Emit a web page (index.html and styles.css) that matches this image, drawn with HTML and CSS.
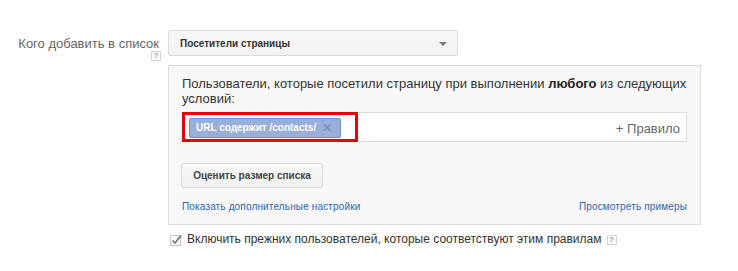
FILE: index.html
```html
<!DOCTYPE html>
<html lang="ru">
<head>
<meta charset="utf-8">
<link rel="stylesheet" href="styles.css">
</head>
<body>
<div class="form">
  <div class="label-col">
    <div class="label">Кого добавить в список</div>
    <span class="help">?</span>
  </div>
  <div class="content">
    <div class="select">
      <span class="select-text">Посетители страницы</span>
      <span class="arrow"></span>
    </div>
    <div class="panel">
      <p class="intro">Пользователи, которые посетили страницу при выполнении <strong>любого</strong> из следующих условий:</p>
      <div class="rules">
        <span class="chip"><span class="chip-text">URL содержит /contacts/</span><span class="chip-x">✕</span></span>
        <span class="add-rule">+ Правило</span>
        <div class="highlight"></div>
      </div>
      <button class="btn">Оценить размер списка</button>
      <div class="links">
        <a class="link">Показать дополнительные настройки</a>
        <a class="link">Просмотреть примеры</a>
      </div>
    </div>
    <div class="check-row">
      <svg class="check" width="12" height="12" viewBox="0 0 12 12">
        <rect x="0.5" y="1.5" width="10" height="10" fill="#fff" stroke="#c4c4c4"/>
        <path d="M2.5 6.5 L5 9 L11 1.5" fill="none" stroke="#6e6e6e" stroke-width="1.6"/>
      </svg>
      <span class="check-text">Включить прежних пользователей, которые соответствуют этим правилам</span>
      <span class="help help-inline">?</span>
    </div>
  </div>
</div>
</body>
</html>
```
FILE: styles.css
```css
* { box-sizing: border-box; }
body {
  margin: 0;
  background: #fff;
  font-family: "Liberation Sans", Arial, sans-serif;
  color: #333;
}
.form {
  display: flex;
  padding-top: 30px;
}
.label-col {
  width: 168px;
  padding-right: 9px;
  display: flex;
  flex-direction: column;
  align-items: flex-end;
}
.label {
  font-size: 13px;
  line-height: 15px;
  color: #666;
  margin-top: 6px;
}
.help {
  display: inline-block;
  width: 10px;
  height: 10px;
  border: 1px solid #d4d4d4;
  background: #f8f8f8;
  color: #aaa;
  font-size: 8px;
  line-height: 8px;
  text-align: center;
  font-weight: bold;
  margin-top: 0;
  margin-right: -2px;
}
.content {
  width: 533px;
}
.select {
  width: 290px;
  height: 26px;
  border: 1px solid #dcdcdc;
  border-radius: 2px;
  background: linear-gradient(#f8f8f8, #f1f1f1);
  display: flex;
  align-items: center;
  justify-content: space-between;
  padding: 0 10px 0 11px;
}
.select-text {
  font-size: 10px;
  font-weight: bold;
  color: #333;
}
.arrow {
  width: 0;
  height: 0;
  border-left: 4px solid transparent;
  border-right: 4px solid transparent;
  border-top: 4px solid #777;
  margin-top: 1px;
}
.panel {
  margin-top: 9px;
  border: 1px solid #ddd;
  background: #f8f8f8;
  padding: 10px 13px 10px 13px;
}
.intro {
  margin: 0;
  font-size: 13px;
  line-height: 15px;
  color: #333;
}
.intro strong { color: #222; }
.rules {
  position: relative;
  margin-top: 6px;
  height: 30px;
  border: 1px solid #dcdcdc;
  background: #fff;
  display: flex;
  align-items: center;
  justify-content: space-between;
  padding: 0 6px 0 6px;
}
.chip {
  display: flex;
  align-items: center;
  height: 20px;
  margin-top: 1px;
  padding: 0 8px 0 6px;
  background: #9aafd8;
  border: 1px solid #6e8fc6;
  border-radius: 2px;
  width: 152px;
  white-space: nowrap;
}
.chip-text {
  color: #fff;
  font-size: 10px;
  font-weight: bold;
}
.chip-x {
  margin-left: auto;
  color: #7b93c1;
  font-size: 12px;
  line-height: 12px;
  font-weight: bold;
}
.add-rule {
  font-size: 13px;
  color: #666;
  margin-top: 2px;
}
.highlight {
  position: absolute;
  left: -1px;
  top: -1px;
  width: 176px;
  height: 30px;
  border: 3px solid #e8000c;
}
.btn {
  display: block;
  margin: 21px 0 0 -1px;
  width: 142px;
  height: 25px;
  border: 1px solid #dcdcdc;
  border-radius: 2px;
  background: linear-gradient(#f8f8f8, #f1f1f1);
  font-family: inherit;
  font-size: 10px;
  font-weight: bold;
  color: #444;
  padding: 0;
}
.links {
  display: flex;
  justify-content: space-between;
  margin-top: 12px;
  line-height: 14px;
}
.link {
  font-size: 10px;
  color: #2d64b3;
  letter-spacing: 0.15px;
}
.check-row {
  display: flex;
  align-items: center;
  margin-top: 7px;
  padding-left: 2px;
}
.check { margin-right: 5px; }
.check-text {
  font-size: 12px;
  line-height: 15px;
  color: #333;
}
.help-inline {
  margin: 0 0 0 5px;
}
```
